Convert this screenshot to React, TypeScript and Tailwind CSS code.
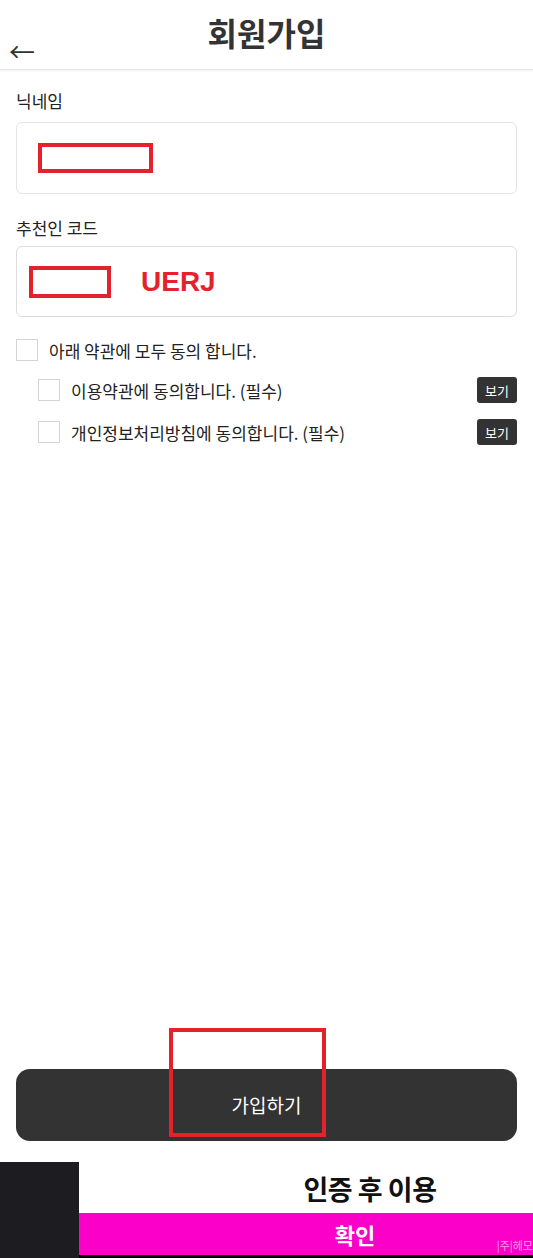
import React from "react";

const font = { fontFamily: '"Noto Sans CJK KR", "Noto Sans", sans-serif' };

const Check = ({ label, view }: { label: string; view?: boolean }) => (
  <div className="flex items-center">
    <span className="h-[22px] w-[22px] shrink-0 border border-[#d4d4d4] bg-white" />
    <span className="ml-[11px] flex-1 text-[17px] leading-none text-[#222]">{label}</span>
    {view && (
      <button
        type="button"
        className="h-[26px] w-[40px] rounded-[3px] bg-[#333] text-[13px] leading-none text-white"
      >
        보기
      </button>
    )}
  </div>
);

export default function App() {
  return (
    <div className="flex h-[1258px] w-[533px] flex-col bg-white" style={font}>
      <header className="relative h-[70px] shrink-0 border-b border-[#e6e6e6] shadow-[0_1px_2px_rgba(0,0,0,0.06)]">
        <h1 className="pt-[10px] text-center text-[32px] font-bold leading-[44px] text-[#333]">회원가입</h1>
        <span className="absolute left-[9px] top-[38px] text-[26px] leading-none text-[#333]">←</span>
      </header>

      <main className="flex flex-1 flex-col px-4 pt-[20px]">
        <label className="text-[17px] leading-[22px] text-[#222]">닉네임</label>
        <div className="mt-[10px] flex h-[72px] items-center rounded-[6px] border border-[#e4e4e4] pl-[21px]">
          <span className="h-[30px] w-[115px] border-[4px] border-[#e3232c]" />
        </div>

        <label className="mt-[23px] text-[17px] leading-[22px] text-[#222]">추천인 코드</label>
        <div className="mt-[7px] flex h-[71px] items-center rounded-[6px] border border-[#dcdcdc] pl-[12px]">
          <span className="h-[32px] w-[82px] border-[4px] border-[#e3232c]" />
          <span className="ml-[30px] text-[28px] font-bold leading-none text-[#e3232c]" style={{ fontFamily: '"Liberation Sans", Arial, sans-serif' }}>
            UERJ
          </span>
        </div>

        <div className="mt-[22px] flex flex-col gap-[16px]">
          <Check label="아래 약관에 모두 동의 합니다." />
          <div className="flex flex-col gap-[16px] pl-[22px]">
            <Check label="이용약관에 동의합니다. (필수)" view />
            <Check label="개인정보처리방침에 동의합니다. (필수)" view />
          </div>
        </div>

        <div className="flex-1" />

        <div className="relative mb-[21px]">
          <button
            type="button"
            className="flex h-[72px] w-full items-center justify-center rounded-[14px] bg-[#333] text-[19px] text-white"
          >
            가입하기
          </button>
          <span className="pointer-events-none absolute left-[153px] top-[-41px] h-[109px] w-[157px] border-[4px] border-[#e3232c]" />
        </div>
      </main>

      <footer className="flex h-[96px] shrink-0">
        <div className="w-[79px] bg-[#1d1d21]" />
        <div className="flex flex-1 flex-col">
          <div className="flex h-[51px] items-center justify-center bg-white pl-[128px] pt-[4px] text-[27px] font-bold tracking-[-0.5px] text-[#111]">
            인증 후 이용
          </div>
          <div className="relative flex h-[42px] items-center justify-center bg-[#fa00c8] pl-[98px] text-[22px] font-bold text-white">
            확인
            <span className="absolute bottom-[2px] right-[0px] text-[11px] font-normal text-[#f9a0e8]">|주|헤모</span>
          </div>
          <div className="h-[3px] bg-black" />
        </div>
      </footer>
    </div>
  );
}
